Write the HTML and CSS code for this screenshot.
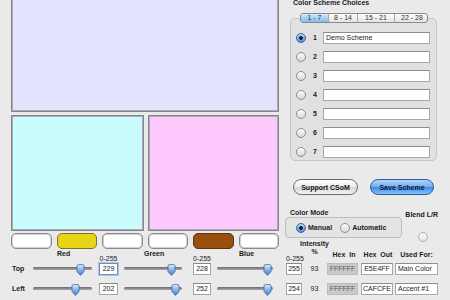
FILE: index.html
```html
<!DOCTYPE html>
<html>
<head>
  <title>Color Scheme Editor</title>
  <meta name="viewport" content="width=device-width, initial-scale=1.0" />
  <link rel="stylesheet" href="styles.css">
</head>
<body>
  <div class="app">
    <div class="left">
      <div class="panel panel-main"></div>
      <div class="split">
        <div class="panel panel-cyan"></div>
        <div class="panel panel-pink"></div>
      </div>
      <div class="swatches">
        <div class="swatch"></div>
        <div class="swatch swatch-yellow"></div>
        <div class="swatch"></div>
        <div class="swatch"></div>
        <div class="swatch swatch-brown"></div>
        <div class="swatch"></div>
      </div>
      <div class="channel-names">
        <span class="name-red">Red</span>
        <span class="name-green">Green</span>
        <span class="name-blue">Blue</span>
      </div>
      <div class="ranges">
        <span class="range range-a">0-255</span>
        <span class="range range-b">0-255</span>
      </div>
      <div class="slider-row">
        <span class="row-label">Top</span>
        <div class="slider s1"><svg class="thumb" style="left:43px" viewBox="0 0 9 12"><use href="#knob"/></svg></div>
        <div class="num num-a focused">229</div>
        <div class="slider s2"><svg class="thumb" style="left:43px" viewBox="0 0 9 12"><use href="#knob"/></svg></div>
        <div class="num num-b">228</div>
        <div class="slider s3"><svg class="thumb" style="left:46px" viewBox="0 0 9 12"><use href="#knob"/></svg></div>
      </div>
      <div class="slider-row">
        <span class="row-label">Left</span>
        <div class="slider s1"><svg class="thumb" style="left:38px" viewBox="0 0 9 12"><use href="#knob"/></svg></div>
        <div class="num num-a">202</div>
        <div class="slider s2"><svg class="thumb" style="left:47px" viewBox="0 0 9 12"><use href="#knob"/></svg></div>
        <div class="num num-b">252</div>
        <div class="slider s3"><svg class="thumb" style="left:46px" viewBox="0 0 9 12"><use href="#knob"/></svg></div>
      </div>
    </div>

    <div class="right">
      <div class="title">Color Scheme Choices</div>
      <div class="tabs">
        <span class="tab active">1 - 7</span>
        <span class="tab">8 - 14</span>
        <span class="tab">15 - 21</span>
        <span class="tab">22 - 28</span>
      </div>
      <div class="group">
        <div class="scheme"><span class="radio on"></span><b class="idx">1</b><div class="field">Demo Scheme</div></div>
        <div class="scheme"><span class="radio"></span><b class="idx">2</b><div class="field"></div></div>
        <div class="scheme"><span class="radio"></span><b class="idx">3</b><div class="field"></div></div>
        <div class="scheme"><span class="radio"></span><b class="idx">4</b><div class="field"></div></div>
        <div class="scheme"><span class="radio"></span><b class="idx">5</b><div class="field"></div></div>
        <div class="scheme"><span class="radio"></span><b class="idx">6</b><div class="field"></div></div>
        <div class="scheme"><span class="radio"></span><b class="idx">7</b><div class="field"></div></div>
      </div>

      <div class="buttons">
        <button class="btn btn-support">Support CSoM</button>
        <button class="btn btn-save">Save Scheme</button>
      </div>

      <div class="mode-head">
        <span>Color Mode</span>
        <span class="blend-label">Blend L/R</span>
      </div>
      <div class="mode-row">
        <div class="mode-box">
          <span class="radio on"></span><b>Manual</b>
          <span class="radio second"></span><b>Automatic</b>
        </div>
        <span class="radio blend"></span>
      </div>

      <div class="cols out-head">
        <span class="h-range">0-255</span>
        <span class="h-int">Intensity<br>%</span>
        <span class="h-hex">Hex&nbsp; In</span>
        <span class="h-hex">Hex&nbsp; Out</span>
        <span class="h-hex">Used For:</span>
      </div>
      <div class="cols out-row">
        <div class="num num-c">255</div>
        <span class="pct">93</span>
        <div class="hexbox hex-in">FFFFFF</div>
        <div class="hexbox hex-out">E5E4FF</div>
        <div class="hexbox used">Main Color</div>
      </div>
      <div class="cols out-row">
        <div class="num num-c">254</div>
        <span class="pct">93</span>
        <div class="hexbox hex-in">FFFFFF</div>
        <div class="hexbox hex-out">CAFCFE</div>
        <div class="hexbox used">Accent #1</div>
      </div>
    </div>
  </div>

  <svg class="defs" width="0" height="0">
    <defs>
      <linearGradient id="knobFill" x1="0" y1="0" x2="0" y2="1">
        <stop offset="0" stop-color="#e2eefb"/>
        <stop offset="0.45" stop-color="#8bb9ee"/>
        <stop offset="1" stop-color="#3a7dd4"/>
      </linearGradient>
      <path id="knob" d="M1 2 Q1 0.6 2.4 0.6 H6.6 Q8 0.6 8 2 V7.6 L4.5 11.4 L1 7.6 Z" fill="url(#knobFill)" stroke="#3c66a4" stroke-width="0.8"/>
    </defs>
  </svg>
</body>
</html>
```

FILE: styles.css
```css
body { margin: 0; background: #eaeaea; font-family: "Liberation Sans", Arial, sans-serif; font-size: 7px; color: #1c1c1c; width: 450px; height: 300px; overflow: hidden; }
.app { display: flex; margin-top: -3px; }
.defs { display: block; width: 0; height: 0; }

/* left side: preview panels, swatches, sliders */
.left { margin-left: 11px; width: 268px; }
.panel { box-sizing: border-box; border: 1px solid #85858e; box-shadow: inset 0 0 0 1px #abaab4; }
.panel-main { height: 115px; background: #e5e4ff; }
.split { display: grid; grid-template-columns: 133px 131px; gap: 4px; margin-top: 3px; height: 116px; }
.panel-cyan { background: #cafcfe; }
.panel-pink { background: #fdc9fc; }

.swatches { display: grid; grid-template-columns: repeat(6, 1fr); gap: 5px; margin-top: 2px; height: 16px; }
.swatch { box-sizing: border-box; border: 1px solid #8a8a8a; border-radius: 5px; background: #fff; box-shadow: inset 0 0 0 1px #d2d2d2; }
.swatch-yellow { background: #e5d516; border-color: #7d7420; box-shadow: none; }
.swatch-brown { background: #9b4f0e; border-color: #5c3410; box-shadow: none; }

.channel-names { display: grid; grid-template-columns: 89px 89px 90px; margin-top: 1px; height: 5px; line-height: 8px; font-weight: bold; }
.name-red { padding-left: 46px; }
.name-green { padding-left: 44px; }
.name-blue { padding-left: 50px; }

.ranges { display: flex; height: 8px; line-height: 8px; }
.range { text-align: center; }
.range-a { margin-left: 88px; width: 19px; }
.range-b { margin-left: 75px; width: 18px; }

.slider-row { display: flex; height: 12px; align-items: flex-start; }
.slider-row + .slider-row { margin-top: 8px; }
.row-label { width: 21px; padding-left: 1px; line-height: 12px; font-weight: bold; }
.slider { position: relative; height: 12px; }
.slider::before { content: ""; position: absolute; left: 0; right: 0; top: 4px; height: 3px; border-radius: 2px; background: linear-gradient(#6c6c6c, #a8a8a8); }
.s1 { width: 59px; }
.s2 { width: 58px; margin-left: 6px; }
.s3 { width: 56px; margin-left: 6px; }
.thumb { position: absolute; top: 1px; width: 9px; height: 12px; overflow: visible; }

.num { box-sizing: border-box; height: 12px; border: 1px solid #a4a4a4; border-top-color: #868686; background: #fff; line-height: 10px; text-align: center; }
.num-a { width: 19px; margin-left: 7px; }
.num-b { width: 18px; margin-left: 11px; }
.num-c { width: 16px; }
.focused { border-color: #7190bd; box-shadow: 0 0 0 1px #a9c4e6; }

/* right side: scheme choices and colour values */
.right { margin-left: 6px; width: 165px; }
.title { margin-top: 2px; padding-left: 8px; line-height: 8px; font-weight: bold; }

.tabs { position: relative; z-index: 1; box-sizing: border-box; display: grid; grid-template-columns: 27px 29px 37px 35px; width: 128px; height: 10px; margin: 6px 0 0 15px; border: 1px solid #8a8a8a; border-radius: 3px; overflow: hidden; background: linear-gradient(#fefefe, #e3e3e3); }
.tab { line-height: 8px; text-align: center; color: #333; border-left: 1px solid #a8a8a8; }
.tab:first-child { border-left: 0; }
.tab.active { background: linear-gradient(#d4e7fb, #86b8ef); color: #1a2a44; }

.group { box-sizing: border-box; display: flex; flex-direction: column; gap: 6px; width: 147px; height: 143px; margin: -5px 0 0 5px; padding: 12px 0 0 5px; border: 1px solid #c5c5c5; border-radius: 5px; background: #e1e1e1; }
.scheme { display: flex; align-items: center; height: 13px; }
.idx { width: 10px; margin-left: 7px; }
.field { box-sizing: border-box; width: 107px; height: 12px; padding-left: 2px; border: 1px solid #a8a8a8; border-top-color: #8c8c8c; background: #fff; line-height: 10px; }

.radio { flex: none; box-sizing: border-box; width: 10px; height: 10px; border-radius: 50%; border: 1px solid #8e8e8e; background: linear-gradient(#ffffff, #d6d6d6); }
.radio.on { border-color: #3b62a0; background: radial-gradient(circle, #15223a 0 1.6px, transparent 2.2px), linear-gradient(#b8d7f8, #4a8edc); }

.buttons { display: flex; gap: 12px; margin-top: 18px; padding-left: 8px; }
.btn { box-sizing: border-box; height: 16px; padding: 0; border-radius: 8px; font: bold 7px "Liberation Sans", Arial, sans-serif; color: #111; border: 1px solid #6b6b6b; background: linear-gradient(#ffffff 0%, #ececec 50%, #d6d6d6 52%, #f4f4f4 100%); }
.btn-support { width: 65px; }
.btn-save { width: 64px; border-color: #2d5c9d; color: #0c1a30; background: linear-gradient(#b0d4f9 0%, #72adf1 50%, #3f8ae4 52%, #80c2fb 100%); }

.mode-head { display: flex; height: 8px; margin-top: 14px; padding-left: 5px; line-height: 8px; font-weight: bold; }
.blend-label { margin-left: auto; margin-right: 12px; padding-top: 2px; }
.mode-row { display: flex; height: 21px; }
.mode-box { box-sizing: border-box; display: flex; align-items: center; width: 117px; height: 21px; padding-left: 10px; border: 1px solid #bcbcbc; border-radius: 4px; background: #e4e4e4; }
.mode-box b { margin-left: 2px; }
.mode-box .second { margin-left: 8px; }
.radio.blend { margin: 15px 0 0 16px; border-color: #b0b0b0; background: linear-gradient(#fafafa, #e2e2e2); }

.cols { display: grid; grid-template-columns: 16px 25px 34px 34px 43px; padding-left: 1px; }
.out-head { height: 23px; margin-top: 2px; }
.h-range { align-self: end; line-height: 8px; white-space: nowrap; }
.h-int { justify-self: center; text-align: center; line-height: 8px; font-weight: bold; white-space: nowrap; }
.h-hex { align-self: end; justify-self: center; margin-bottom: 4px; line-height: 8px; font-weight: bold; white-space: nowrap; }
.out-row { height: 12px; }
.out-row + .out-row { margin-top: 8px; }
.pct { justify-self: center; line-height: 12px; }
.hexbox { box-sizing: border-box; height: 12px; border: 1px solid #a8a8a8; border-top-color: #8e8e8e; background: #fff; line-height: 10px; text-align: center; white-space: nowrap; }
.hex-in { width: 31px; background: #c9c9c9; border-color: #bcbcbc; color: #5a5a5a; }
.hex-out { width: 32px; }
.used { width: 43px; padding-left: 2px; text-align: left; }
```
